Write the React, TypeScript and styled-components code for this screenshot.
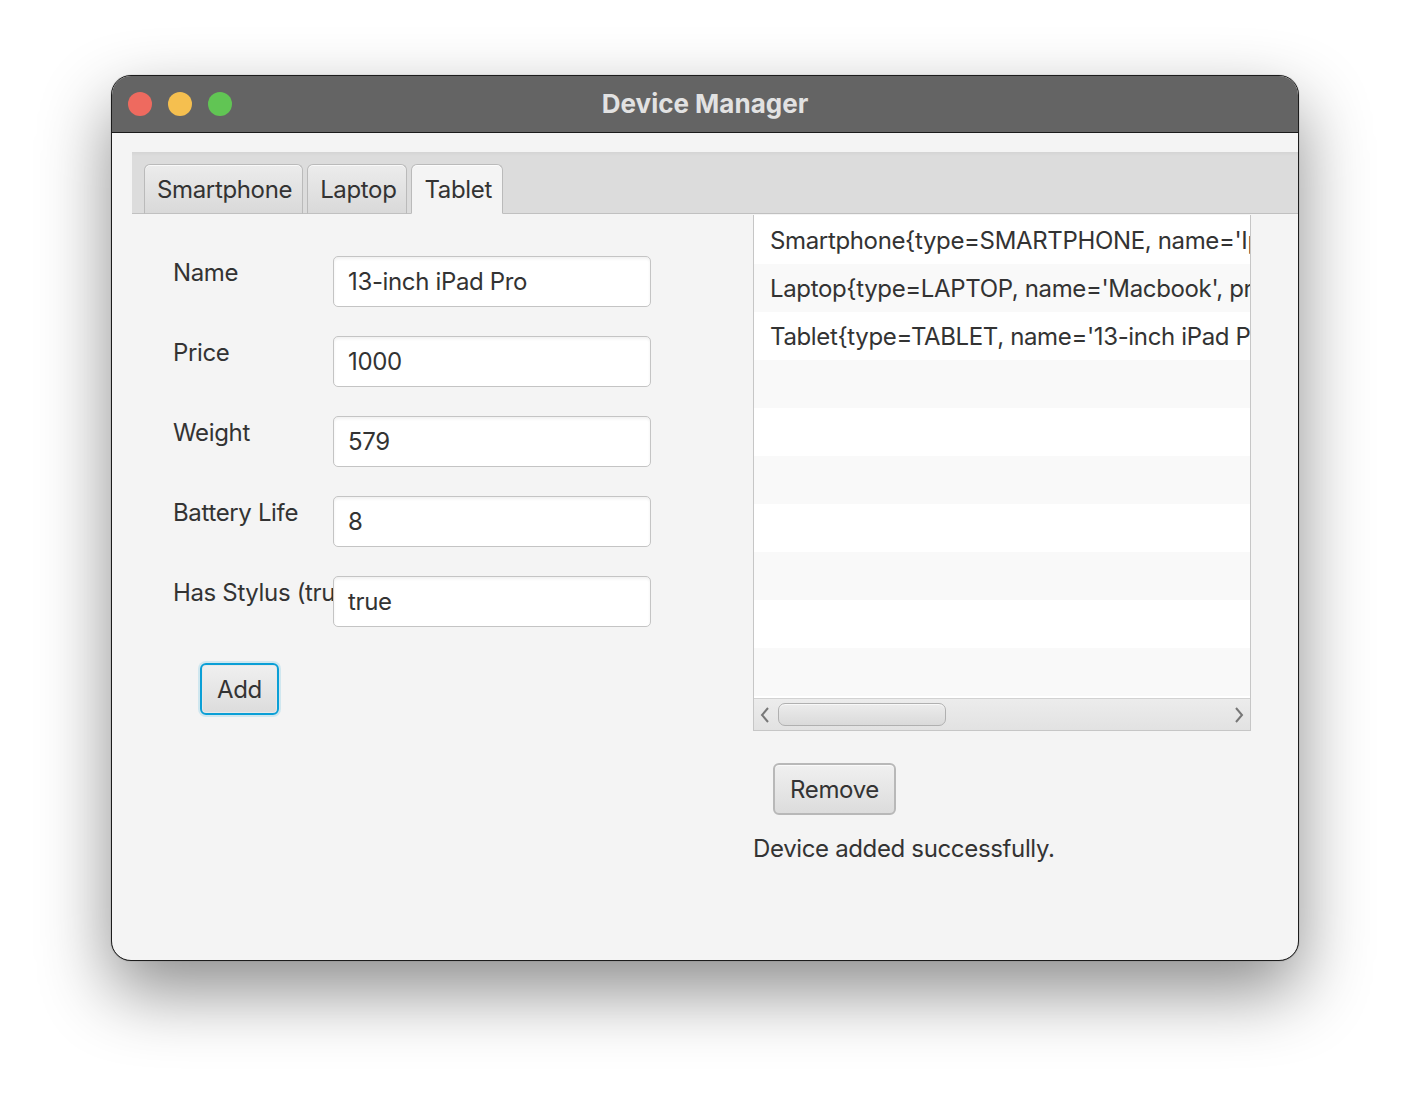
import React from "react";
import styled, { createGlobalStyle } from "styled-components";

const Global = createGlobalStyle`
  html, body { margin: 0; padding: 0; background: #ffffff; }
  body { width: 1410px; height: 1108px; overflow: hidden; font-family: Inter, "Noto Sans", "Liberation Sans", sans-serif; }
  * { box-sizing: border-box; }
`;

const Page = styled.div`
  width: 1410px;
  height: 1108px;
  padding: 75px 0 0 111px;
`;

const Window = styled.div`
  width: 1188px;
  height: 886px;
  border: 1px solid #1c1c1c;
  border-radius: 20px;
  overflow: hidden;
  background: #f4f4f4;
  box-shadow: 0 30px 70px rgba(0, 0, 0, 0.45), 0 0 1px rgba(0,0,0,0.5);
  display: flex;
  flex-direction: column;
`;

const TitleBar = styled.div`
  height: 57px;
  flex: none;
  background: #646464;
  border-bottom: 1px solid #1a1a1a;
  display: flex;
  align-items: center;
  position: relative;
  padding-left: 16px;
  gap: 16px;
`;

const Light = styled.span<{ $c: string }>`
  width: 24px;
  height: 24px;
  border-radius: 50%;
  background: ${(p) => p.$c};
`;

const Title = styled.div`
  position: absolute;
  left: 0;
  right: 0;
  top: 0;
  bottom: 1px;
  display: flex;
  align-items: center;
  justify-content: center;
  color: #e2e2e2;
  font-weight: 700;
  font-size: 26px;
  pointer-events: none;
`;

const Content = styled.div`
  flex: 1;
  padding: 19px 0 0 20px;
  display: flex;
  flex-direction: column;
  letter-spacing: -0.35px;
`;

const TabHeader = styled.div`
  height: 62px;
  background: linear-gradient(#d4d4d4, #dcdcdc 4px);
  border-bottom: 1px solid #c0c0c0;
  display: flex;
  align-items: flex-end;
  padding-left: 12px;
  gap: 4px;
`;

const Tab = styled.div<{ $sel?: boolean }>`
  height: 50px;
  margin-bottom: -1px;
  padding: 0 10px 0 12px;
  display: flex;
  align-items: center;
  font-size: 24px;
  color: #333333;
  border: 1px solid #bababa;
  border-bottom: ${(p) => (p.$sel ? "1px solid #f4f4f4" : "1px solid #c0c0c0")};
  border-radius: 6px 6px 0 0;
  background: ${(p) =>
    p.$sel ? "#f4f4f4" : "linear-gradient(#ececec, #d9d9d9)"};
  box-shadow: inset 0 1px 0 rgba(255,255,255,0.7);
`;

const Body = styled.div`
  flex: 1;
  display: flex;
`;

const FormCol = styled.div`
  width: 621px;
  padding: 42px 0 0 41px;
  display: flex;
  flex-direction: column;
`;

const Form = styled.div`
  display: grid;
  grid-template-columns: 160px 318px;
  row-gap: 29px;
`;

const Label = styled.div`
  font-size: 24px;
  color: #333333;
  line-height: 32px;
  padding-top: 1px;
  white-space: nowrap;
  overflow: hidden;
  align-self: start;
`;

const Field = styled.div`
  height: 51px;
  background: #ffffff;
  border: 1px solid #c4c4c4;
  border-radius: 5px;
  box-shadow: inset 0 2px 3px rgba(0, 0, 0, 0.06);
  font-size: 24px;
  color: #333333;
  display: flex;
  align-items: center;
  padding: 0 14px;
`;

const Button = styled.div<{ $focus?: boolean }>`
  height: 52px;
  padding: 0 15px;
  display: inline-flex;
  align-items: center;
  font-size: 24px;
  color: #333333;
  border-radius: 6px;
  background: linear-gradient(#f0f0f0, #dcdcdc);
  border: ${(p) => (p.$focus ? "2px solid #0a9fd6" : "2px solid #b8b8b8")};
  box-shadow: ${(p) =>
    p.$focus ? "0 0 0 2px rgba(10, 159, 214, 0.15), inset 0 0 0 1px #e8e8e8" : "inset 0 1px 0 #fafafa"};
`;

const AddWrap = styled.div`
  padding: 36px 0 0 27px;
`;

const RightCol = styled.div`
  display: flex;
  flex-direction: column;
`;

const List = styled.div`
  width: 498px;
  height: 516px;
  margin-top: 1px;
  border: 1px solid #c6c6c6;
  border-top: none;
  background: #ffffff;
  display: flex;
  flex-direction: column;
  overflow: hidden;
`;

const Rows = styled.div`
  flex: 1;
  padding-top: 1px;
  overflow: hidden;
`;

const Row = styled.div<{ $odd: boolean }>`
  height: 48px;
  background: ${(p) => (p.$odd ? "#f9f9f9" : "#ffffff")};
  font-size: 24px;
  color: #333333;
  padding-left: 16px;
  display: flex;
  align-items: center;
  white-space: nowrap;
  overflow: hidden;
`;

const ScrollBar = styled.div`
  height: 32px;
  flex: none;
  border-top: 1px solid #d2d2d2;
  background: linear-gradient(#ececec, #e2e2e2);
  display: flex;
  align-items: center;
  padding: 0 4px;
  gap: 6px;
`;

const Arrow = styled.svg`
  flex: none;
  width: 14px;
  height: 20px;
`;

const Track = styled.div`
  flex: 1;
  height: 24px;
  display: flex;
  align-items: center;
`;

const Thumb = styled.div`
  width: 168px;
  height: 23px;
  border-radius: 7px;
  border: 1px solid #b0b0b0;
  background: linear-gradient(#ececec, #dadada);
  box-shadow: inset 0 1px 0 #f8f8f8;
`;

const RemoveWrap = styled.div`
  padding: 32px 0 0 20px;
`;

const Status = styled.div`
  margin-top: 18px;
  font-size: 24px;
  color: #333333;
  line-height: 32px;
`;

const fields: [string, string][] = [
  ["Name", "13-inch iPad Pro"],
  ["Price", "1000"],
  ["Weight", "579"],
  ["Battery Life", "8"],
  ["Has Stylus (true/false)", "true"],
];

const items = [
  "Smartphone{type=SMARTPHONE, name='Iphone 15', price=800}",
  "Laptop{type=LAPTOP, name='Macbook', price=1200}",
  "Tablet{type=TABLET, name='13-inch iPad Pro', price=1000}",
  "", "", "", "", "", "", "",
];

export default function App() {
  return (
    <Page>
      <Global />
      <Window>
        <TitleBar>
          <Light $c="#ee6a5f" />
          <Light $c="#f5bf4f" />
          <Light $c="#61c554" />
          <Title>Device Manager</Title>
        </TitleBar>
        <Content>
          <TabHeader>
            <Tab>Smartphone</Tab>
            <Tab>Laptop</Tab>
            <Tab $sel>Tablet</Tab>
          </TabHeader>
          <Body>
            <FormCol>
              <Form>
                {fields.map(([l, v]) => (
                  <React.Fragment key={l}>
                    <Label>{l}</Label>
                    <Field>{v}</Field>
                  </React.Fragment>
                ))}
              </Form>
              <AddWrap>
                <Button $focus>Add</Button>
              </AddWrap>
            </FormCol>
            <RightCol>
              <List>
                <Rows>
                  {items.map((t, i) => (
                    <Row key={i} $odd={i % 2 === 1}>{t}</Row>
                  ))}
                </Rows>
                <ScrollBar>
                  <Arrow viewBox="0 0 14 20">
                    <path d="M10 3 L4 10 L10 17" fill="none" stroke="#777" strokeWidth="2" />
                  </Arrow>
                  <Track>
                    <Thumb />
                  </Track>
                  <Arrow viewBox="0 0 14 20">
                    <path d="M4 3 L10 10 L4 17" fill="none" stroke="#777" strokeWidth="2" />
                  </Arrow>
                </ScrollBar>
              </List>
              <RemoveWrap>
                <Button>Remove</Button>
              </RemoveWrap>
              <Status>Device added successfully.</Status>
            </RightCol>
          </Body>
        </Content>
      </Window>
    </Page>
  );
}
